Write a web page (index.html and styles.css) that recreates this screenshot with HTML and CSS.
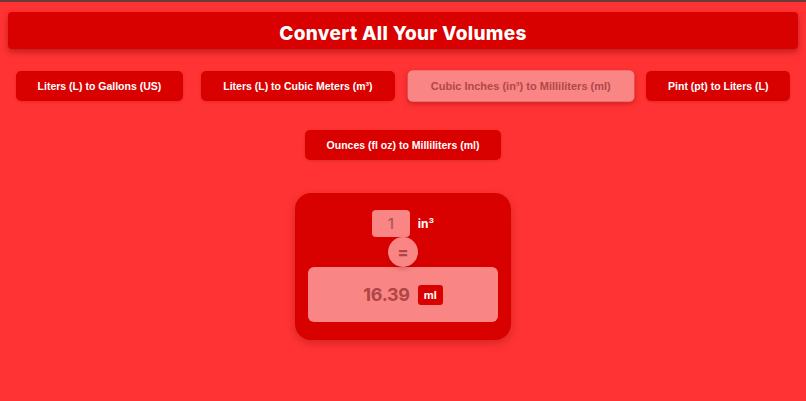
FILE: index.html
```html
<!DOCTYPE html>
<html>
<head>
<meta charset="utf-8">
<link rel="stylesheet" href="styles.css">
</head>
<body>
<div class="page">
  <header class="header"><h1 class="title">Convert All Your Volumes</h1></header>
  <nav class="tabs">
    <button class="tab">Liters (L) to Gallons (US)</button>
    <button class="tab">Liters (L) to Cubic Meters (m³)</button>
    <button class="tab active">Cubic Inches (in³) to Milliliters (ml)</button>
    <button class="tab">Pint (pt) to Liters (L)</button>
    <button class="tab">Ounces (fl oz) to Milliliters (ml)</button>
  </nav>
  <main class="card">
    <div class="input-row">
      <div class="input">1</div>
      <span class="unit">in³</span>
    </div>
    <div class="equals">=</div>
    <div class="result">
      <span class="value">16.39</span>
      <span class="badge">ml</span>
    </div>
  </main>
</div>
</body>
</html>
```
FILE: styles.css
```css
html, body {
  margin: 0;
  padding: 0;
}
body {
  background: #ff3333;
  border-top: 2px solid #6b3a3a;
  font-family: "Liberation Sans", Arial, sans-serif;
  height: 399px;
  overflow: hidden;
}
.page {
  padding: 10px 8px 0;
  display: flex;
  flex-direction: column;
  align-items: center;
}
.header {
  align-self: stretch;
  background: #d90000;
  border-radius: 4px;
  height: 37px;
  box-sizing: border-box;
  padding-top: 6px;
  display: flex;
  align-items: center;
  justify-content: center;
  box-shadow: 0 3px 6px rgba(120, 0, 0, 0.45);
}
.title {
  margin: 0;
  color: #fff;
  font-family: Inter, "Open Sans", sans-serif;
  font-weight: 800;
  font-size: 19px;
  letter-spacing: 0.3px;
}
.tabs {
  margin-top: 22px;
  display: flex;
  flex-wrap: wrap;
  justify-content: center;
  column-gap: 18px;
  row-gap: 29px;
  width: 806px;
}
.tab {
  height: 30px;
  padding: 0 22px;
  border: none;
  border-radius: 5px;
  background: #d90000;
  color: #fff;
  font-family: "Liberation Sans", Arial, sans-serif;
  font-weight: bold;
  font-size: 10.5px;
  box-shadow: 0 1px 3px rgba(120, 0, 0, 0.2);
}
.tab.active {
  background: #f98585;
  color: #b04848;
  transform: scale(1.05);
  box-shadow: 0 2px 5px rgba(120, 0, 0, 0.35);
}
.card {
  margin-top: 33px;
  width: 216px;
  height: 147px;
  box-sizing: border-box;
  background: #d90000;
  border-radius: 16px;
  padding: 17px 13px 0;
  display: flex;
  flex-direction: column;
  align-items: center;
  box-shadow: 0 3px 8px rgba(120, 0, 0, 0.3);
}
.input-row {
  display: flex;
  align-items: center;
  gap: 8px;
}
.input {
  width: 38px;
  height: 27px;
  background: #f98585;
  border-radius: 4px;
  color: #b05555;
  font-family: Inter, sans-serif;
  font-weight: 500;
  font-size: 15px;
  display: flex;
  align-items: center;
  justify-content: center;
}
.unit {
  color: #fff;
  font-family: Inter, sans-serif;
  font-weight: 700;
  font-size: 12px;
}
.equals {
  width: 30px;
  height: 30px;
  border-radius: 50%;
  background: #f98585;
  color: #b04545;
  font-family: Inter, sans-serif;
  font-weight: 800;
  font-size: 16px;
  display: flex;
  align-items: center;
  justify-content: center;
  position: relative;
  z-index: 1;
  box-shadow: 0 2px 4px rgba(120, 0, 0, 0.25);
}
.result {
  align-self: stretch;
  height: 55px;
  background: #f98585;
  border-radius: 6px;
  display: flex;
  align-items: center;
  justify-content: center;
  gap: 8px;
}
.value {
  color: #b04545;
  font-family: Inter, sans-serif;
  font-weight: 700;
  font-size: 18px;
  letter-spacing: -0.3px;
}
.badge {
  background: #d90000;
  color: #fff;
  font-family: Inter, sans-serif;
  font-weight: 700;
  font-size: 11px;
  border-radius: 3px;
  padding: 3px 6px;
}
```
